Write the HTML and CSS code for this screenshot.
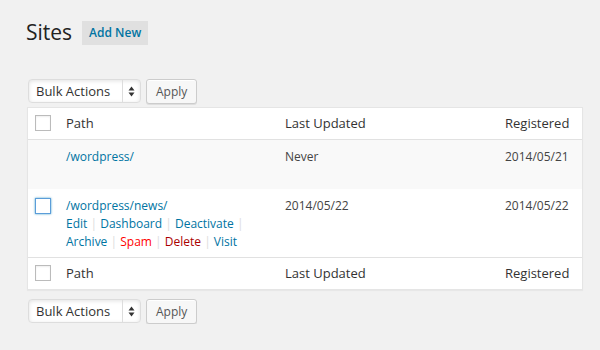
FILE: index.html
```html
<!DOCTYPE html>
<html>
<head>
    <title>Sites</title>
    <link rel="stylesheet" href="styles.css">
</head>
<body>
    <div class="wrap">
        <div class="page-head">
            <h2>Sites</h2>
            <a class="add-new" href="#">Add New</a>
        </div>

        <div class="tablenav">
            <div class="bulk-select">
                <span>Bulk Actions</span>
                <span class="arrows">
                    <svg width="7" height="11" viewBox="0 0 7 11"><path d="M3.5 0.5 L6.5 4.5 H0.5 Z M3.5 10.5 L6.5 6.5 H0.5 Z" fill="#333"/></svg>
                </span>
            </div>
            <button class="button">Apply</button>
        </div>

        <div class="sites-table">
            <div class="row head">
                <div class="cb"><span class="checkbox"></span></div>
                <div>Path</div>
                <div>Last Updated</div>
                <div>Registered</div>
            </div>
            <div class="row alt">
                <div class="cb"></div>
                <div>
                    <a href="#">/wordpress/</a>
                </div>
                <div>Never</div>
                <div>2014/05/21</div>
            </div>
            <div class="row">
                <div class="cb"><span class="checkbox focus"></span></div>
                <div>
                    <a href="#">/wordpress/news/</a>
                    <div class="row-actions">
                        <a href="#">Edit</a> <span class="sep">|</span>
                        <a href="#">Dashboard</a> <span class="sep">|</span>
                        <a href="#">Deactivate</a> <span class="sep">|</span>
                        <a href="#">Archive</a> <span class="sep">|</span>
                        <a href="#" class="spam">Spam</a> <span class="sep">|</span>
                        <a href="#" class="delete">Delete</a> <span class="sep">|</span>
                        <a href="#">Visit</a>
                    </div>
                </div>
                <div>2014/05/22</div>
                <div>2014/05/22</div>
            </div>
            <div class="row head foot">
                <div class="cb"><span class="checkbox"></span></div>
                <div>Path</div>
                <div>Last Updated</div>
                <div>Registered</div>
            </div>
        </div>

        <div class="tablenav bottom">
            <div class="bulk-select">
                <span>Bulk Actions</span>
                <span class="arrows">
                    <svg width="7" height="11" viewBox="0 0 7 11"><path d="M3.5 0.5 L6.5 4.5 H0.5 Z M3.5 10.5 L6.5 6.5 H0.5 Z" fill="#333"/></svg>
                </span>
            </div>
            <button class="button">Apply</button>
        </div>
    </div>
</body>
</html>
```

FILE: styles.css
```css
body {
    margin: 0;
    background-color: #f1f1f1;
    font-family: "Open Sans", sans-serif;
    font-size: 12px;
    color: #444;
}
a {
    color: #0074a2;
    text-decoration: none;
}
.wrap {
    padding: 18px 17px 0 27px;
}
.page-head {
    display: flex;
    align-items: center;
    height: 29px;
}
.page-head h2 {
    margin: 0 10px 0 -1px;
    font-size: 21px;
    font-weight: 400;
    line-height: 29px;
    color: #222;
}
.add-new {
    background-color: #e0e0e0;
    font-weight: 600;
    padding: 0 7px;
    height: 24px;
    line-height: 24px;
    margin-top: 1px;
}
.tablenav {
    display: flex;
    gap: 5px;
    margin-top: 32px;
    height: 25px;
}
.tablenav.bottom {
    margin-top: 9px;
}
.bulk-select {
    display: flex;
    align-items: center;
    justify-content: space-between;
    box-sizing: border-box;
    width: 113px;
    height: 24px;
    margin-left: 1px;
    padding-left: 7px;
    border: 1px solid #ddd;
    border-radius: 4px;
    background: #fff;
    box-shadow: inset 0 1px 4px rgba(0,0,0,0.12);
    color: #333;
    font-size: 13px;
}
.arrows {
    display: flex;
    align-items: center;
    justify-content: center;
    width: 17px;
    height: 100%;
    border-left: 1px solid #ddd;
}
.button {
    box-sizing: border-box;
    height: 25px;
    padding: 0 9px;
    font-family: inherit;
    font-size: 12px;
    color: #555;
    background: #f7f7f7;
    border: 1px solid #ccc;
    border-radius: 3px;
    box-shadow: inset 0 1px 0 #fff, 0 1px 0 rgba(0,0,0,0.08);
}
.sites-table {
    margin-top: 3px;
    background: #fff;
    border: 1px solid #e5e5e5;
    box-shadow: 0 1px 1px rgba(0,0,0,0.04);
}
.row {
    display: grid;
    grid-template-columns: 30px 219px 220px 1fr;
    padding: 8px 0 6px;
    line-height: 18px;
}
.row > div {
    padding-left: 8px;
}
.row > .cb {
    padding-left: 0;
}
.row.alt {
    background-color: #f9f9f9;
    min-height: 36px;
    padding-bottom: 5px;
}
.row.head {
    padding: 6px 0;
    font-size: 13px;
    line-height: 19px;
    color: #333;
    border-bottom: 1px solid #e1e1e1;
}
.row.foot {
    border-bottom: none;
    border-top: 1px solid #e1e1e1;
}
.checkbox {
    display: block;
    box-sizing: border-box;
    width: 16px;
    height: 16px;
    margin: 1px 0 0 7px;
    border: 1px solid #bbb;
    background: #fff;
    box-shadow: inset 0 1px 2px rgba(0,0,0,0.07);
}
.checkbox.focus {
    border-color: #5b9dd9;
    box-shadow: 0 0 2px rgba(30,140,190,0.8);
}
.row-actions {
    color: #ddd;
}
.row-actions .sep {
    margin: 0;
}
.row-actions .spam {
    color: #f00;
}
.row-actions .delete {
    color: #a00;
}
```
